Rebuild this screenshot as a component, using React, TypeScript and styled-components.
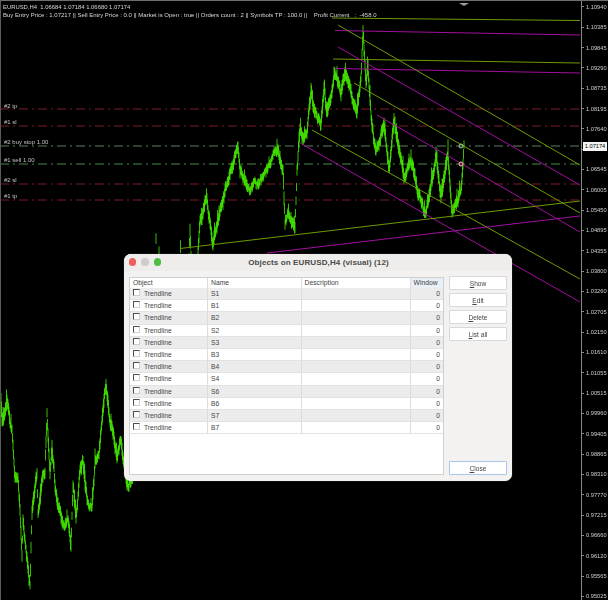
import React from 'react';
import styled, { createGlobalStyle } from 'styled-components';

const Global = createGlobalStyle`
  html, body { margin: 0; padding: 0; background: #000; }
  #root { width: 608px; height: 600px; }
  * { box-sizing: border-box; }
`;

const Page = styled.div`
  position: relative;
  width: 608px;
  height: 600px;
  overflow: hidden;
  display: flex;
  background: #000;
  padding: 2px 0 0 1px;
  border-top: 1px solid #6e6e6e;
  border-left: 1px solid #5a5a5a;
  font-family: "Liberation Sans", Arial, sans-serif;
`;

const Chart = styled.div`
  position: relative;
  flex: 1;
  min-width: 0;
`;

const ChartSvg = styled.svg`
  position: absolute;
  left: -2px;
  top: -3px;
  width: 581px;
  height: 600px;
  filter: blur(0.3px);
`;

const Info = styled.div`
  position: absolute;
  left: 1px;
  top: 0;
  color: #d8d8d8;
  font-size: 6px;
  line-height: 8px;
  white-space: pre;
  filter: blur(0.2px);
`;

const InfoTop = styled.div`
  font-size: 5.9px;
`;

const Tag = styled.div<{ $y: number }>`
  position: absolute;
  left: 2px;
  top: ${p => p.$y}px;
  color: #c4c4c4;
  font-size: 6px;
  line-height: 9px;
  white-space: pre;
  filter: blur(0.2px);
`;

const Axis = styled.div`
  position: relative;
  width: 27px;
  height: 603px;
  margin-top: -3px;
  border-left: 1px solid #8a8a8a;
  display: flex;
  flex-direction: column;
  & > :first-child { margin-top: -3.3px; }
`;

const AxisLabel = styled.div`
  height: 20.33px;
  flex: none;
  display: flex;
  align-items: center;
  color: #cfcfcf;
  font-size: 5.7px;
  white-space: nowrap;
  filter: blur(0.2px);
  &::before {
    content: "";
    width: 2px;
    height: 1px;
    background: #8a8a8a;
    margin-right: 2px;
  }
`;

const PriceBadge = styled.div`
  position: absolute;
  left: 1px;
  top: 142px;
  width: 24px;
  height: 9px;
  background: #f4f4f4;
  color: #000;
  font-size: 5.7px;
  line-height: 9px;
  text-align: center;
`;

const Dialog = styled.div`
  position: absolute;
  left: 123px;
  top: 253px;
  width: 388px;
  height: 227px;
  border-radius: 7px;
  background: #f3f2f1;
  display: flex;
  flex-direction: column;
  color: #3a3a3a;
  box-shadow: 0 0 1px rgba(255,255,255,.6);
  filter: blur(0.25px);
`;

const TitleBar = styled.div`
  position: relative;
  flex: none;
  height: 17px;
  background: #efedeb;
  border-radius: 7px 7px 0 0;
  display: flex;
  align-items: center;
  justify-content: center;
  padding-left: 1px;
  font-size: 8px;
  font-weight: 700;
  color: #4a4a4a;
  letter-spacing: 0.12px;
`;

const Lights = styled.div`
  position: absolute;
  left: 4.5px;
  top: 4.2px;
  display: flex;
  gap: 5px;
`;

const Light = styled.span<{ $c: string }>`
  width: 7.5px;
  height: 7.5px;
  border-radius: 50%;
  background: ${p => p.$c};
`;

const Body = styled.div`
  flex: 1;
  min-height: 0;
  display: flex;
  padding: 6px 4px 6px 5px;
  gap: 5px;
`;

const Table = styled.div`
  width: 315px;
  height: 197.5px;
  background: #fff;
  border: 1px solid #cfcfcf;
  display: flex;
  flex-direction: column;
`;

const Row = styled.div<{ $odd?: boolean }>`
  display: grid;
  grid-template-columns: 78px 93.5px 109px 32.5px;
  height: 12.2px;
  flex: none;
  background: ${p => (p.$odd ? '#ececec' : '#fff')};
  border-bottom: 1px solid #e2e2e2;
  font-size: 6.7px;
  line-height: 11.2px;
  color: #444;
`;

const HeadRow = styled(Row)`
  height: 10px;
  background: #fff;
  border-bottom: 0;
  font-size: 6.8px;
`;

const Cell = styled.div<{ $right?: boolean; $blue?: boolean }>`
  display: flex;
  align-items: center;
  justify-content: ${p => (p.$right ? 'flex-end' : 'flex-start')};
  padding: 0 3px;
  border-right: 1px solid #dcdcdc;
  background: ${p => (p.$blue ? '#e9eff6' : 'transparent')};
  white-space: nowrap;
  overflow: hidden;
  &:last-child { border-right: 0; }
`;

const Check = styled.span`
  flex: none;
  width: 7px;
  height: 7px;
  margin: -2px 4px 0 0;
  background: #fff;
  border-top: 1px solid #4e4e4e;
  border-left: 1px solid #4e4e4e;
  border-right: 1px solid #cfcfcf;
  border-bottom: 1px solid #cfcfcf;
`;

const Side = styled.div`
  flex: 1;
  display: flex;
  flex-direction: column;
  gap: 3px;
  margin: -1px 0 0;
`;

const Button = styled.button<{ $primary?: boolean }>`
  width: 58px;
  height: 14px;
  padding: 0;
  flex: none;
  background: #fff;
  border: 1px solid ${p => (p.$primary ? '#a9c6e8' : '#d8d8d8')};
  border-radius: 1px;
  font-family: inherit;
  font-size: 6.6px;
  color: #444;
  ${p => (p.$primary ? 'margin-top: auto;' : '')}
  & u { text-underline-offset: 1px; }
`;

function rng(seed: number) {
  let s = seed;
  return () => {
    s = (s * 16807) % 2147483647;
    return s / 2147483647;
  };
}

const K: [number, number][] = [
  [1, 400], [2, 422], [7, 395], [10, 426], [12, 430], [15, 480], [18, 477], [20, 510], [22, 555], [23, 523], [27, 557], [30, 583],
  [32, 513], [37, 470], [38, 510], [42, 480], [45, 470], [47, 413], [50, 473], [52, 443], [55, 483], [60, 513], [63, 530], [68, 523], [71, 547],
  [73, 487], [76, 520], [80, 470], [83, 460], [87, 500], [92, 507], [95, 463], [99, 453], [102, 423], [106, 380], [110, 417], [117, 457],
  [121, 443], [127, 487], [135, 470], [142, 440], [150, 320], [155, 310], [156, 236], [157, 310], [158.5, 310], [159, 252], [160, 310], [180, 290],
  [180.5, 250], [181, 290], [188, 290], [190, 230], [192, 290], [197, 265],
  [200, 222], [207, 198], [213, 243], [222, 202], [230, 172], [233, 160], [238, 142], [240, 168], [248, 190], [258, 185], [267, 172], [278, 150],
  [283, 172], [285, 220], [290, 215], [295, 233], [297, 172], [300, 130], [303, 140], [307, 133], [311, 92], [315, 113], [321, 127], [324, 88],
  [327, 117], [334, 72], [341, 93], [346, 72], [352, 95], [357, 113], [361, 85], [363, 32], [366, 85], [368, 66], [371, 117], [376, 157], [380, 140],
  [384, 122], [389, 167], [394, 120], [399, 150], [404, 180], [411, 157], [418, 190], [426, 213], [431, 185], [436, 157], [441, 197], [448, 157],
  [452, 217], [457, 200], [461, 190], [464, 147],
];

function pricePath() {
  const r = rng(73);
  let d = '';
  let j = 0;
  let walk = 0;
  for (let x = 1; x <= 464; x += 0.5) {
    while (j < K.length - 2 && K[j + 1][0] < x) j++;
    const [x0, y0] = K[j];
    const [x1, y1] = K[j + 1];
    const y = y0 + ((y1 - y0) * (x - x0)) / (x1 - x0);
    const steep = Math.min(5, Math.abs(y1 - y0) / Math.max(0.5, x1 - x0));
    walk = walk * 0.8 + (r() - 0.5) * 5;
    const spike = r() > 0.9 ? r() * 8 : 0;
    const a = 1.2 + r() * 4 + steep * 0.5 + spike;
    const b = 1.2 + r() * 4 + steep * 0.5;
    d += `M${x.toFixed(1)} ${(y + walk - a).toFixed(1)}V${(y + walk + b).toFixed(1)}`;
  }
  return d;
}

const GREEN = '#6f9a00';
const MAG = '#a0109f';
const LINES: [number, number, number, number, string][] = [
  [332, 18, 580, 20.5, GREEN],
  [335, 30.5, 580, 35, MAG],
  [333, 59, 580, 63, GREEN],
  [335, 68.5, 580, 73, MAG],
  [338, 25, 580, 165, GREEN],
  [338, 47, 580, 185, MAG],
  [354, 83, 580, 213, GREEN],
  [377, 115, 580, 232, MAG],
  [312, 130, 580, 279, GREEN],
  [300, 143, 580, 302, MAG],
  [180, 248.5, 580, 201, GREEN],
  [267, 253, 580, 216, MAG],
];

const DASHES: [number, string][] = [
  [109, '#7e1a28'], [126, '#7e1a28'], [146, '#5f7f60'], [164, '#468a46'], [184, '#7e1a28'], [200, '#7e1a28'],
];

const PRICES = ['1.10940','1.10385','1.09845','1.09290','1.08735','1.08195','1.07640','','1.06545','1.06005','1.05450','1.04895','1.04355','1.03800','1.03260','1.02705','1.02150','1.01610','1.01055','1.00515','0.99960','0.99405','0.98865','0.98310','0.97770','0.97215','0.96660','0.96120','0.95565','0.95025'];

const TAGS: [number, string][] = [
  [98.5, '#2 tp'], [115, '#1 sl'], [135, '#2 buy stop 1.00'], [153, '#1 sell 1.00'], [173, '#2 sl'], [189, '#1 tp'],
];

const ROWS = ['S1','B1','B2','S2','S3','B3','B4','S4','S6','B6','S7','B7'];

export default function App() {
  const price = React.useMemo(pricePath, []);
  return (
    <Page>
      <Global />
      <Chart>
        <ChartSvg viewBox="0 0 581 600">
          <path d="M459 3h10l-5 3z" fill="#9a9a9a" />
          {DASHES.map(([y, c]) => (
            <line key={y} x1={0} x2={581} y1={y} y2={y} stroke={c} strokeWidth={1} strokeDasharray="9 4 2 4" />
          ))}
          <path d={price} stroke="#45ee00" strokeWidth={0.8} fill="none" />
          {LINES.map(([a, b, c, d, s], i) => (
            <line key={i} x1={a} y1={b} x2={c} y2={d} stroke={s} strokeWidth={1} />
          ))}
          <circle cx={461} cy={146} r={2} fill="none" stroke="#a8d8a8" strokeWidth={1} />
          <circle cx={461} cy={164} r={2} fill="#7a1020" stroke="#e8c8c8" strokeWidth={1} />
        </ChartSvg>
        <Info>
          <InfoTop>EURUSD,H4  1.06684 1.07184 1.06680 1.07174</InfoTop>
          {'Buy Entry Price : 1.07217 || Sell Entry Price : 0.0 || Market is Open : true || Orders count : 2 || Symbols TP : 100.0 ||    Profit Current   :  -458.0'}
        </Info>
        {TAGS.map(([y, t]) => (
          <Tag key={t} $y={y}>{t}</Tag>
        ))}
      </Chart>
      <Axis>
        {PRICES.map((p, i) => (
          <AxisLabel key={i}>{p}</AxisLabel>
        ))}
        <PriceBadge>1.07174</PriceBadge>
      </Axis>
      <Dialog>
        <TitleBar>
          <Lights>
            <Light $c="#ee5f5b" />
            <Light $c="#cfcdcb" />
            <Light $c="#4bbf45" />
          </Lights>
          Objects on EURUSD,H4 (visual) (12)
        </TitleBar>
        <Body>
          <Table>
            <HeadRow>
              <Cell>Object</Cell>
              <Cell>Name</Cell>
              <Cell>Description</Cell>
              <Cell $blue>Window</Cell>
            </HeadRow>
            {ROWS.map((n, i) => (
              <Row key={n} $odd={i % 2 === 0}>
                <Cell><Check />Trendline</Cell>
                <Cell>{n}</Cell>
                <Cell />
                <Cell $right>0</Cell>
              </Row>
            ))}
          </Table>
          <Side>
            <Button><u>S</u>how</Button>
            <Button><u>E</u>dit</Button>
            <Button><u>D</u>elete</Button>
            <Button><u>L</u>ist all</Button>
            <Button $primary><u>C</u>lose</Button>
          </Side>
        </Body>
      </Dialog>
    </Page>
  );
}
